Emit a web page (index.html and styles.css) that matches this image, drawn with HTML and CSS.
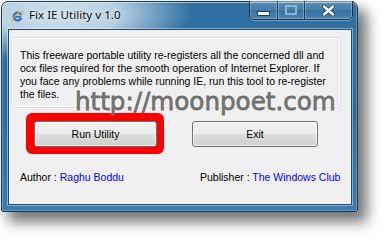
FILE: index.html
```html
<!DOCTYPE html>
<html lang="en">
<head>
<meta charset="utf-8">
<title>Fix IE Utility v 1.0</title>
<link rel="stylesheet" href="styles.css">
</head>
<body>
<div class="window">
  <div class="titlebar">
    <svg class="app-icon" width="13" height="13" viewBox="0 0 16 16" aria-hidden="true">
      <path d="M12.6 9.6 A4.8 4.8 0 1 1 12.5 6.2" fill="none" stroke="#1f6fd1" stroke-width="2.6"/>
      <path d="M4.6 8.3 H12.4" stroke="#1f6fd1" stroke-width="2.2"/>
      <path d="M2.2 14.2 C0.2 12.4 4.5 6.2 9.5 3.6 C13.6 1.5 16 1.6 14.6 3.8" fill="none" stroke="#f2a51c" stroke-width="1.4" stroke-linecap="round"/>
    </svg>
    <span class="title">Fix IE Utility v 1.0</span>
    <div class="caption">
      <div class="cbtn cbtn-min">
        <svg width="13" height="5" viewBox="0 0 13 5"><rect x="0.5" y="0.5" width="12" height="4" fill="#fff" stroke="#23425c"/></svg>
      </div>
      <div class="cbtn cbtn-max">
        <svg width="12" height="10" viewBox="0 0 12 10"><rect x="1" y="1" width="10" height="8" fill="none" stroke="#8fb4cf" stroke-width="2"/></svg>
      </div>
      <div class="cbtn cbtn-close">
        <svg width="13" height="11" viewBox="0 0 13 11"><path d="M2 1.5 L11 9.5 M11 1.5 L2 9.5" stroke="#23425c" stroke-width="4.2" stroke-linecap="round"/><path d="M2 1.5 L11 9.5 M11 1.5 L2 9.5" stroke="#fff" stroke-width="2.4" stroke-linecap="round"/></svg>
      </div>
    </div>
  </div>
  <div class="client">
    <div class="groupbox">
      <p class="desc">This freeware portable utility re-registers all the concerned dll and<br>ocx files required for the smooth operation of Internet Explorer. If<br>you face any problems while running IE, run this tool to re-register<br>the files.</p>
    </div>
    <div class="actions">
      <div class="highlight"><button class="btn btn-run">Run Utility</button></div>
      <button class="btn btn-exit">Exit</button>
    </div>
    <div class="credits">
      <div>Author : <span class="link">Raghu Boddu</span></div>
      <div>Publisher : <span class="link">The Windows Club</span></div>
    </div>
  </div>
  <div class="watermark">http://moonpoet.com</div>
</div>
</body>
</html>
```
FILE: styles.css
```css
html, body {
  margin: 0;
  padding: 0;
  background: #ffffff;
}
body {
  width: 386px;
  height: 239px;
  overflow: hidden;
  font-family: "Liberation Sans", Arial, sans-serif;
}
.window {
  position: relative;
  box-sizing: border-box;
  margin: 1px 0 0 1px;
  width: 357px;
  height: 211px;
  border: 1px solid #1a3954;
  border-radius: 7px 7px 2px 2px;
  padding: 0 5px 6px 6px;
  display: flex;
  flex-direction: column;
  background:
    radial-gradient(ellipse 135px 48px at 55px 12px, rgba(214,229,239,0.97) 0%, rgba(200,219,233,0.9) 45%, rgba(170,200,222,0.5) 75%, rgba(120,165,200,0) 100%),
    linear-gradient(180deg, #2f70a1 0%, #2c6d9e 55%, #3a7cad 100%);
  box-shadow:
    inset 0 1px 0 rgba(255,255,255,0.55),
    inset 1px 0 0 rgba(255,255,255,0.25),
    inset -1px 0 0 rgba(255,255,255,0.25),
    inset 0 -1px 0 rgba(255,255,255,0.2),
    8px 9px 14px 1px rgba(0,0,0,0.55);
}
.titlebar {
  height: 27px;
  display: flex;
  align-items: flex-start;
  padding-left: 3px;
}
.app-icon {
  margin-top: 8px;
  flex: none;
}
.title {
  margin-left: 5px;
  margin-top: 5px;
  font-family: "Noto Sans", "Open Sans", sans-serif;
  font-size: 11.6px;
  line-height: 16px;
  color: #111;
  text-shadow: 0 0 4px rgba(255,255,255,0.9);
  white-space: nowrap;
}
.caption {
  margin-left: auto;
  margin-right: -1px;
  margin-top: -1px;
  height: 18px;
  display: flex;
  border: 1px solid rgba(14,34,54,0.8);
  border-top: none;
  border-radius: 0 0 5px 5px;
  overflow: hidden;
  box-shadow: 0 1px 0 rgba(255,255,255,0.35);
}
.cbtn {
  box-sizing: border-box;
  height: 18px;
  display: flex;
  align-items: center;
  justify-content: center;
  background: linear-gradient(180deg, rgba(255,255,255,0.22) 0%, rgba(255,255,255,0.1) 50%, rgba(255,255,255,0.02) 51%, rgba(255,255,255,0.14) 100%);
  box-shadow: inset 0 0 0 1px rgba(255,255,255,0.28);
  border-right: 1px solid rgba(14,34,54,0.75);
}
.cbtn:last-child {
  border-right: none;
}
.cbtn-min { width: 28px; }
.cbtn-min svg { margin-top: 6px; }
.cbtn-max { width: 27px; }
.cbtn-close { width: 47px; }
.client {
  box-sizing: border-box;
  height: 176px;
  background: #f0f0f0;
  border: 1px solid #24496a;
  box-shadow: 0 0 0 1px rgba(255,255,255,0.4);
  font-size: 10.5px;
  line-height: 13px;
  color: #000;
}
.groupbox {
  box-sizing: border-box;
  margin: 7px 0 0 2px;
  width: 330px;
  height: 71px;
  border: 1px solid #d5dfe5;
  border-radius: 3px;
  box-shadow: inset 0 0 0 1px #ffffff;
  padding: 11px 8px 6px;
}
.desc {
  margin: 0;
  white-space: nowrap;
}
.actions {
  display: flex;
  align-items: flex-start;
  margin: 5px 0 0 17px;
}
.highlight {
  border: 7px solid #ff0000;
  border-radius: 6px;
  padding: 1px 0 0 1px;
  background: #ff0000;
}
.btn {
  box-sizing: border-box;
  display: block;
  height: 26px;
  margin: 0;
  padding: 0;
  border: 1px solid #707070;
  border-radius: 3px;
  background: linear-gradient(180deg, #f2f2f2 0%, #ebebeb 48%, #dddddd 52%, #cfcfcf 100%);
  box-shadow: inset 0 0 0 1px rgba(255,255,255,0.75);
  font-family: "Liberation Sans", Arial, sans-serif;
  font-size: 10.5px;
  color: #000;
  text-align: center;
}
.btn-run {
  width: 123px;
}
.btn-exit {
  width: 126px;
  margin: 8px 0 0 28px;
}
.credits {
  display: grid;
  grid-template-columns: 180px auto;
  margin-top: 17px;
  padding-left: 11px;
  white-space: nowrap;
}
.link {
  color: #0000ff;
}
.watermark {
  position: absolute;
  left: 73px;
  top: 88px;
  font-family: "DejaVu Sans", Verdana, sans-serif;
  font-size: 24.6px;
  line-height: 24px;
  color: rgba(100,100,100,0.9);
  -webkit-text-stroke: 0.8px rgba(100,100,100,0.9);
  text-shadow: 0 0 1.5px rgba(255,255,255,0.9);
  white-space: nowrap;
  pointer-events: none;
}
```
